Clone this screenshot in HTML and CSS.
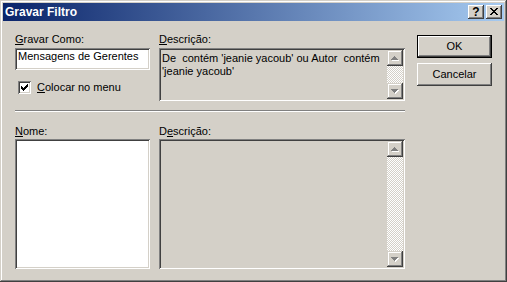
FILE: index.html
```html
<!DOCTYPE html>
<html lang="pt">
<head>
    <meta charset="UTF-8">
    <title>Gravar Filtro</title>
    <link rel="stylesheet" href="styles.css">
</head>
<body>
    <div class="window">
        <div class="titlebar">
            <span class="title">Gravar Filtro</span>
            <div class="caption-buttons">
                <span class="cap-btn help">?</span>
                <span class="cap-btn close">
                    <svg width="12" height="10" viewBox="0 0 12 10" shape-rendering="crispEdges">
                        <rect x="2" y="1" width="2" height="1"/><rect x="8" y="1" width="2" height="1"/>
                        <rect x="3" y="2" width="2" height="1"/><rect x="7" y="2" width="2" height="1"/>
                        <rect x="4" y="3" width="4" height="1"/>
                        <rect x="5" y="4" width="2" height="1"/>
                        <rect x="4" y="5" width="4" height="1"/>
                        <rect x="3" y="6" width="2" height="1"/><rect x="7" y="6" width="2" height="1"/>
                        <rect x="2" y="7" width="2" height="1"/><rect x="8" y="7" width="2" height="1"/>
                    </svg>
                </span>
            </div>
        </div>

        <div class="client">
            <div class="form">
                <div class="row top">
                    <div class="cell">
                        <div class="label"><u>G</u>ravar Como:</div>
                        <div class="field edit">Mensagens de Gerentes</div>
                        <div class="check">
                            <span class="check-box">
                                <svg width="9" height="9" viewBox="0 0 9 9" shape-rendering="crispEdges">
                                    <rect x="1" y="3" width="1" height="3"/>
                                    <rect x="2" y="4" width="1" height="3"/>
                                    <rect x="3" y="5" width="1" height="3"/>
                                    <rect x="4" y="4" width="1" height="3"/>
                                    <rect x="5" y="3" width="1" height="3"/>
                                    <rect x="6" y="2" width="1" height="3"/>
                                    <rect x="7" y="1" width="1" height="3"/>
                                </svg>
                            </span>
                            <span><u>C</u>olocar no menu</span>
                        </div>
                    </div>
                    <div class="cell">
                        <div class="label"><u>D</u>escrição:</div>
                        <div class="field memo short">
                            <div class="memo-text">De  contém 'jeanie yacoub' ou Autor  contém 'jeanie yacoub'</div>
                            <div class="scrollbar">
                                <span class="scroll-btn">
                                    <svg width="16" height="16" viewBox="0 0 16 16" shape-rendering="crispEdges">
                                        <g fill="#fff"><rect x="8" y="7" width="1" height="1"/><rect x="7" y="8" width="3" height="1"/><rect x="6" y="9" width="5" height="1"/><rect x="5" y="10" width="7" height="1"/></g>
                                        <g fill="#808080"><rect x="7" y="6" width="1" height="1"/><rect x="6" y="7" width="3" height="1"/><rect x="5" y="8" width="5" height="1"/><rect x="4" y="9" width="7" height="1"/></g>
                                    </svg>
                                </span>
                                <span class="track"></span>
                                <span class="scroll-btn">
                                    <svg width="16" height="16" viewBox="0 0 16 16" shape-rendering="crispEdges">
                                        <g fill="#fff"><rect x="5" y="7" width="7" height="1"/><rect x="6" y="8" width="5" height="1"/><rect x="7" y="9" width="3" height="1"/><rect x="8" y="10" width="1" height="1"/></g>
                                        <g fill="#808080"><rect x="4" y="6" width="7" height="1"/><rect x="5" y="7" width="5" height="1"/><rect x="6" y="8" width="3" height="1"/><rect x="7" y="9" width="1" height="1"/></g>
                                    </svg>
                                </span>
                            </div>
                        </div>
                    </div>
                </div>

                <div class="separator"></div>

                <div class="row bottom">
                    <div class="cell">
                        <div class="label"><u>N</u>ome:</div>
                        <div class="field list"></div>
                    </div>
                    <div class="cell">
                        <div class="label">D<u>e</u>scrição:</div>
                        <div class="field memo tall">
                            <div class="memo-text"></div>
                            <div class="scrollbar">
                                <span class="scroll-btn">
                                    <svg width="16" height="16" viewBox="0 0 16 16" shape-rendering="crispEdges">
                                        <g fill="#fff"><rect x="8" y="7" width="1" height="1"/><rect x="7" y="8" width="3" height="1"/><rect x="6" y="9" width="5" height="1"/><rect x="5" y="10" width="7" height="1"/></g>
                                        <g fill="#808080"><rect x="7" y="6" width="1" height="1"/><rect x="6" y="7" width="3" height="1"/><rect x="5" y="8" width="5" height="1"/><rect x="4" y="9" width="7" height="1"/></g>
                                    </svg>
                                </span>
                                <span class="track"></span>
                                <span class="scroll-btn">
                                    <svg width="16" height="16" viewBox="0 0 16 16" shape-rendering="crispEdges">
                                        <g fill="#fff"><rect x="5" y="7" width="7" height="1"/><rect x="6" y="8" width="5" height="1"/><rect x="7" y="9" width="3" height="1"/><rect x="8" y="10" width="1" height="1"/></g>
                                        <g fill="#808080"><rect x="4" y="6" width="7" height="1"/><rect x="5" y="7" width="5" height="1"/><rect x="6" y="8" width="3" height="1"/><rect x="7" y="9" width="1" height="1"/></g>
                                    </svg>
                                </span>
                            </div>
                        </div>
                    </div>
                </div>
            </div>

            <div class="actions">
                <button class="btn default">OK</button>
                <button class="btn">Cancelar</button>
            </div>
        </div>
    </div>
</body>
</html>
```

FILE: styles.css
```css
* {
    box-sizing: border-box;
}
body {
    margin: 0;
    background-color: #d4d0c8;
    font-family: 'Liberation Sans', Arial, sans-serif;
    font-size: 11px;
    line-height: 13px;
    color: #000;
}
.window {
    width: 507px;
    height: 282px;
    padding: 3px;
    background-color: #d4d0c8;
    box-shadow: inset -1px -1px #404040, inset 1px 1px #d4d0c8,
                inset -2px -2px #808080, inset 2px 2px #fff;
}

/* caption */
.titlebar {
    height: 18px;
    margin-bottom: 1px;
    display: flex;
    align-items: center;
    justify-content: space-between;
    padding: 0 2px;
    background: linear-gradient(to right, #0a246a, #a6caf0);
}
.title {
    color: #fff;
    font-weight: bold;
    font-size: 12px;
    line-height: 14px;
}
.caption-buttons {
    display: flex;
    gap: 2px;
}
.cap-btn {
    width: 16px;
    height: 14px;
    display: flex;
    align-items: center;
    justify-content: center;
    background-color: #d4d0c8;
    box-shadow: inset -1px -1px #404040, inset 1px 1px #fff,
                inset -2px -2px #808080, inset 2px 2px #d4d0c8;
}
.help {
    font-weight: bold;
    font-size: 12px;
    line-height: 12px;
}

/* client area */
.client {
    display: flex;
    padding: 11px 0 0 12px;
}
.form {
    width: 390px;
}
.row {
    display: grid;
    grid-template-columns: 135px 246px;
    column-gap: 9px;
    align-items: start;
}
.label {
    height: 13px;
    margin-bottom: 2px;
    white-space: nowrap;
}
.bottom .label {
    margin-bottom: 1px;
}
.field {
    box-shadow: inset 1px 1px #808080, inset -1px -1px #fff,
                inset 2px 2px #404040, inset -2px -2px #d4d0c8;
}
.edit {
    height: 22px;
    padding: 2px 3px;
    background-color: #fff;
    white-space: nowrap;
}
.check {
    display: flex;
    align-items: center;
    gap: 6px;
    margin-top: 11px;
    padding-left: 3px;
}
.check-box {
    width: 13px;
    height: 13px;
    padding: 2px;
    background-color: #fff;
    box-shadow: inset 1px 1px #808080, inset -1px -1px #fff,
                inset 2px 2px #404040, inset -2px -2px #d4d0c8;
}
.check-box svg {
    display: block;
}
.memo {
    display: flex;
    padding: 2px;
    background-color: #d4d0c8;
}
.memo.short {
    height: 53px;
}
.memo.tall {
    height: 130px;
}
.memo-text {
    flex: 1;
    padding: 2px 1px 0;
    white-space: pre-wrap;
}
.list {
    height: 130px;
    background-color: #fff;
}
.scrollbar {
    width: 16px;
    display: flex;
    flex-direction: column;
}
.scroll-btn {
    width: 16px;
    height: 16px;
    background-color: #d4d0c8;
    box-shadow: inset -1px -1px #404040, inset 1px 1px #d4d0c8,
                inset -2px -2px #808080, inset 2px 2px #fff;
}
.scroll-btn svg {
    display: block;
}
.track {
    flex: 1;
    background-color: #fff;
    background-image: repeating-conic-gradient(#d4d0c8 0% 25%, #fff 0% 50%);
    background-size: 2px 2px;
}
.separator {
    margin: 9px 0 13px;
    border-top: 1px solid #808080;
    border-bottom: 1px solid #fff;
}

/* push buttons */
.actions {
    display: flex;
    flex-direction: column;
    gap: 5px;
    margin-left: 12px;
    padding-top: 2px;
}
.btn {
    width: 75px;
    height: 23px;
    padding: 0;
    border: none;
    font: inherit;
    color: #000;
    background-color: #d4d0c8;
    box-shadow: inset -1px -1px #404040, inset 1px 1px #fff,
                inset -2px -2px #808080, inset 2px 2px #d4d0c8;
}
.btn.default {
    border: 1px solid #000;
    box-shadow: inset -1px -1px #404040, inset 1px 1px #fff,
                inset -2px -2px #808080;
}
```
